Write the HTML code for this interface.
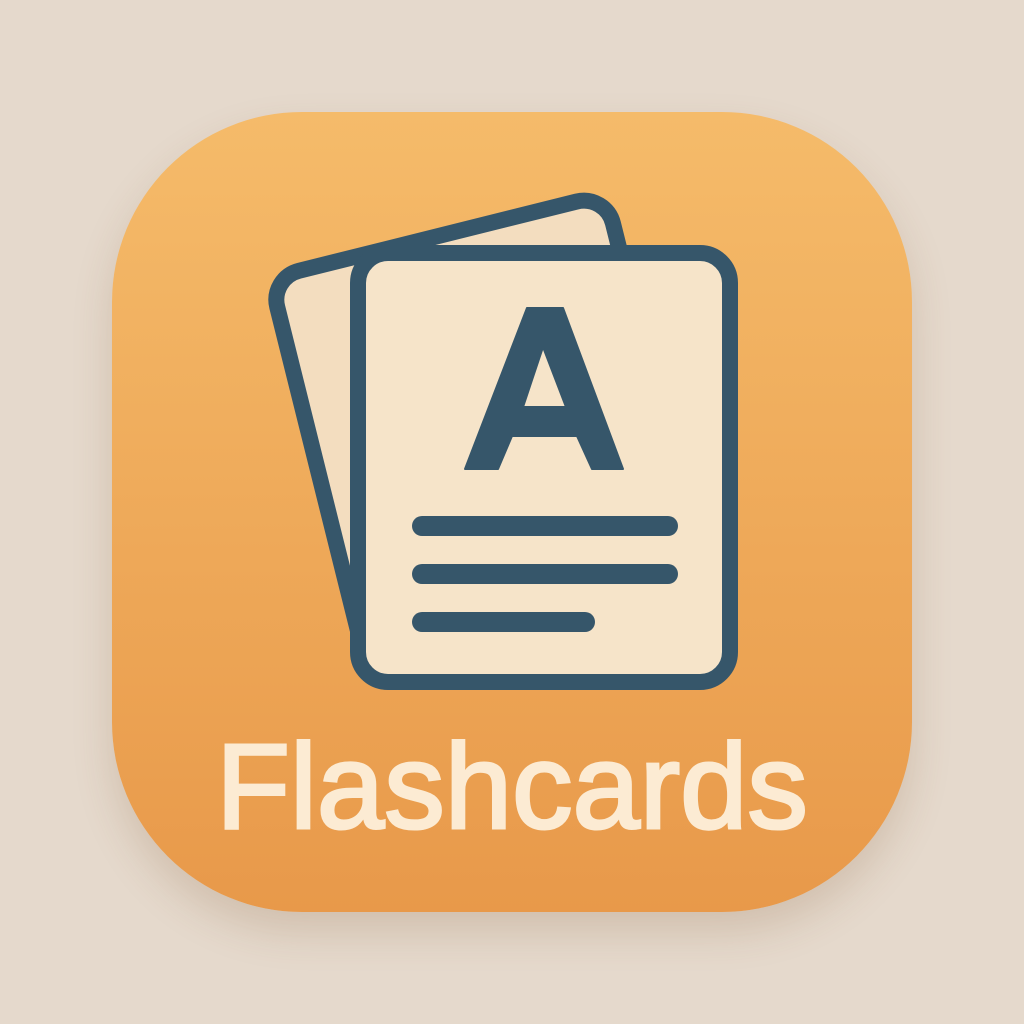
<!DOCTYPE html>
<html><head><style>
html,body{margin:0;padding:0;}
body{width:1024px;height:1024px;background:#E5D9CC;position:relative;overflow:hidden;}
.icon{position:absolute;left:112px;top:112px;width:800px;height:800px;border-radius:190px;background:linear-gradient(#F5BB6A,#E8994A);box-shadow:0 20px 40px rgba(120,80,40,0.18);}
svg{position:absolute;left:0;top:0;}
.t{position:absolute;left:0;width:1024px;top:716px;text-align:center;font-family:"Liberation Sans",sans-serif;font-size:121px;color:#FCEBD3;-webkit-text-stroke:3px #FCEBD3;letter-spacing:0px;}
</style></head><body>
<div class="icon"></div>
<svg width="1024" height="1024">
<g transform="translate(270,278) rotate(-14)">
<rect x="0" y="0" width="346" height="405" rx="30" fill="#F3DDBF" stroke="#36566A" stroke-width="16"/>
</g>
<rect x="358" y="253" width="372" height="429" rx="30" fill="#F6E4C9" stroke="#36566A" stroke-width="16"/>
<path fill="#36566A" d="M527 308 L563 308 L623 469 L592 469 L577 436 L512 436 L498 469 L465 469 Z M543 347 L523 407 L566 407 Z" fill-rule="evenodd" stroke="#36566A" stroke-width="2" stroke-linejoin="round"/>
<g stroke="#36566A" stroke-width="20" stroke-linecap="round">
<line x1="422" y1="526" x2="668" y2="526"/>
<line x1="422" y1="574" x2="668" y2="574"/>
<line x1="422" y1="622" x2="585" y2="622"/>
</g>
</svg>
<div class="t">Flashcards</div>
</body></html>
